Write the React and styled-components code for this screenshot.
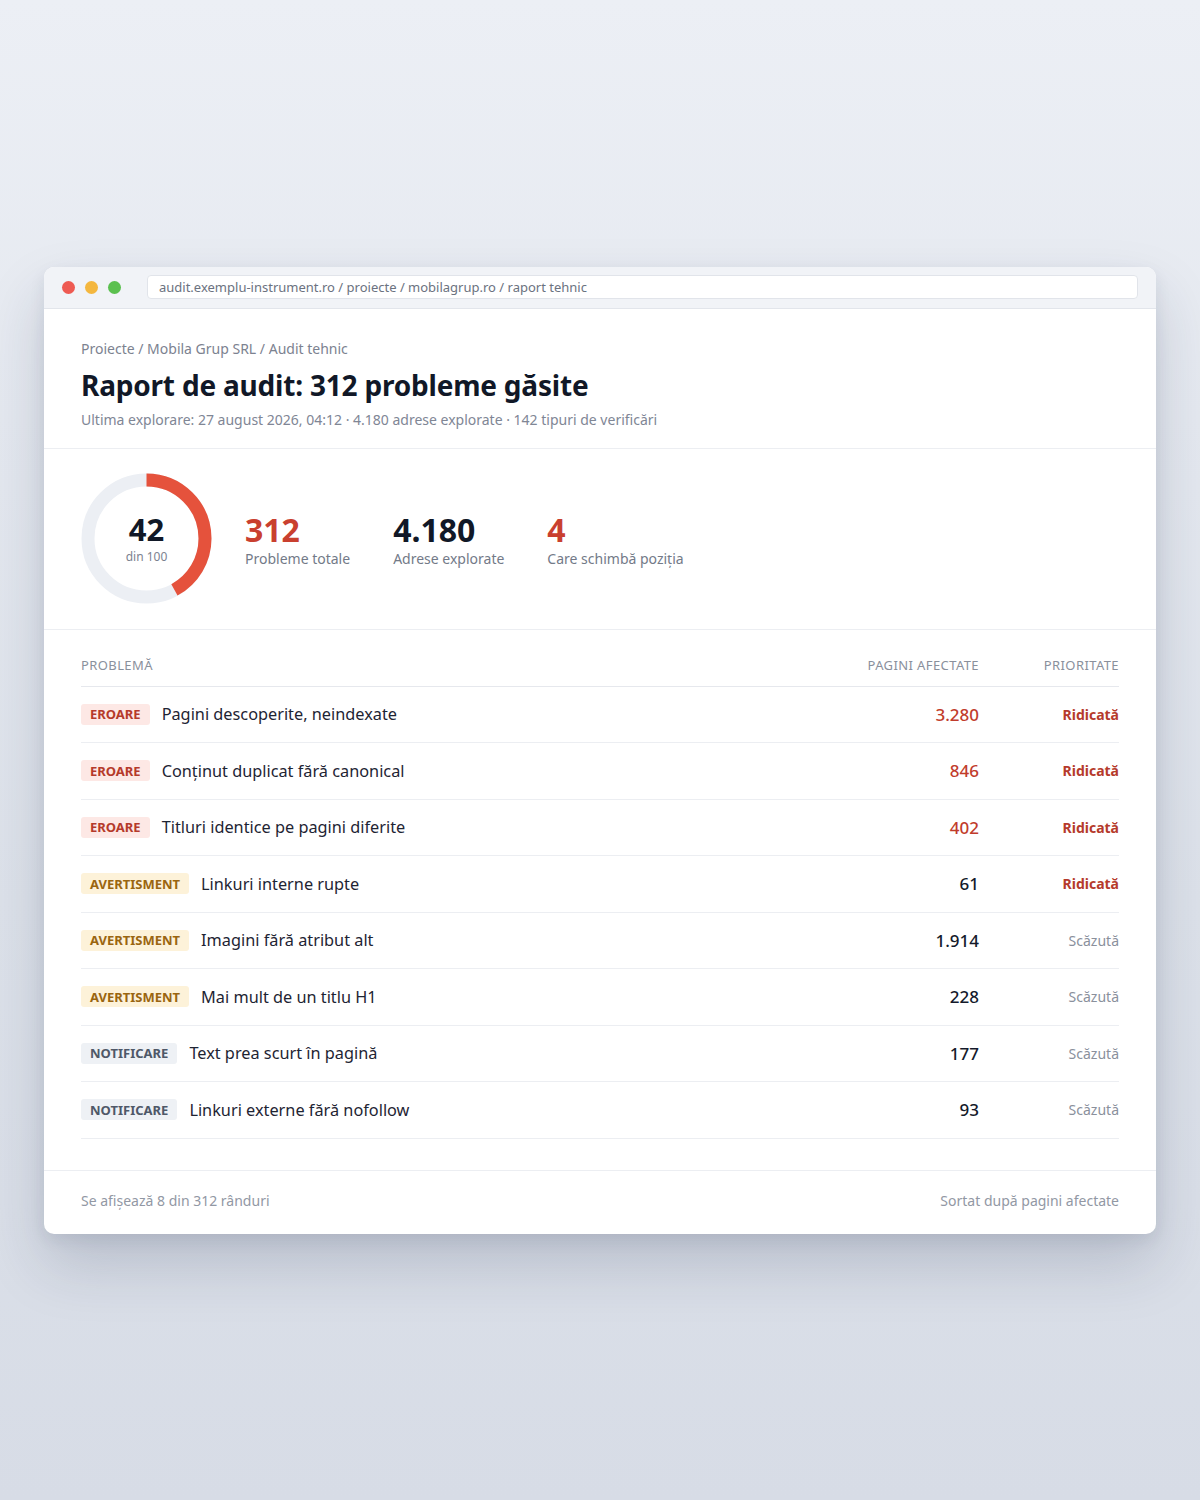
import React from 'react';
import styled, { createGlobalStyle } from 'styled-components';

const GlobalStyle = createGlobalStyle`
    * { box-sizing: border-box; }
    html, body { margin: 0; padding: 0; }
    body {
        font-family: "Noto Sans", "Open Sans", sans-serif;
        background: linear-gradient(180deg, #eceff5 0%, #dde2ea 60%, #d7dce6 100%);
        color: #141a2b;
    }
`;

const Page = styled.div`
    min-height: 1500px;
    display: flex;
    align-items: center;
    justify-content: center;
`;

const Window = styled.div`
    width: 1112px;
    background: #fff;
    border-radius: 10px;
    overflow: hidden;
    box-shadow: 0 30px 60px rgba(30, 40, 70, 0.18), 0 6px 16px rgba(30, 40, 70, 0.08);
`;

const TitleBar = styled.div`
    height: 42px;
    display: flex;
    align-items: center;
    gap: 10px;
    padding: 0 18px;
    background: #f1f3f7;
    border-bottom: 1px solid #e2e5eb;
`;

const Dot = styled.span`
    width: 13px;
    height: 13px;
    border-radius: 50%;
    background: ${p => p.color};
`;

const UrlBar = styled.div`
    flex: 1;
    margin-left: 16px;
    height: 24px;
    display: flex;
    align-items: center;
    padding: 0 11px;
    background: #fff;
    border: 1px solid #e1e4ea;
    border-radius: 4px;
    font-size: 13px;
    color: #6b7280;
`;

const Header = styled.header`
    padding: 30px 37px 19px;
    border-bottom: 1px solid #eceef2;
`;

const Crumbs = styled.div`
    font-size: 14px;
    color: #7c8290;
`;

const Title = styled.h1`
    margin: 8px 0 6px;
    font-size: 28px;
    font-weight: 700;
    color: #111827;
    letter-spacing: -0.2px;
`;

const Meta = styled.div`
    font-size: 14px;
    color: #808695;
`;

const Stats = styled.section`
    display: flex;
    align-items: center;
    gap: 33px;
    padding: 24px 37px 25px;
    border-bottom: 1px solid #eceef2;
`;

const Gauge = styled.div`
    position: relative;
    width: 131px;
    height: 131px;
    flex-shrink: 0;
`;

const GaugeLabel = styled.div`
    position: absolute;
    inset: 0;
    display: flex;
    flex-direction: column;
    align-items: center;
    justify-content: center;
    padding-top: 3px;

    & strong {
        font-size: 31px;
        font-weight: 700;
        line-height: 1;
        color: #111827;
    }

    & span {
        margin-top: 3px;
        font-size: 12px;
        color: #7c8290;
    }
`;

const StatList = styled.div`
    display: flex;
    gap: 43px;
    padding-top: 4px;
`;

const Stat = styled.div`
    display: flex;
    flex-direction: column;

    & strong {
        font-size: 32px;
        font-weight: 700;
        line-height: 1.1;
        color: ${p => p.accent ? '#c9402f' : '#111827'};
    }

    & span {
        margin-top: 1px;
        font-size: 14px;
        color: #737a88;
    }
`;

const TableWrap = styled.section`
    padding: 26px 37px 31px;
    border-bottom: 1px solid #eceef2;
`;

const Grid = styled.div`
    display: grid;
    grid-template-columns: 1fr 180px 140px;
`;

const HeadCell = styled.div`
    padding-bottom: 12px;
    border-bottom: 1px solid #e6e8ed;
    font-size: 13px;
    letter-spacing: 0.4px;
    text-transform: uppercase;
    color: #8a909c;
    text-align: ${p => p.right ? 'right' : 'left'};
`;

const Cell = styled.div`
    height: 56.5px;
    display: flex;
    align-items: center;
    justify-content: ${p => p.right ? 'flex-end' : 'flex-start'};
    border-bottom: 1px solid #eceef2;
`;

const badgeTones = {
    error: { bg: '#fde8e5', fg: '#b53a2b' },
    warn: { bg: '#fdf2d9', fg: '#9a6510' },
    info: { bg: '#eef1f5', fg: '#4f5868' },
};

const Badge = styled.span`
    display: inline-flex;
    align-items: center;
    height: 21px;
    padding: 0 9px;
    margin-right: 12px;
    border-radius: 3px;
    font-size: 13px;
    font-weight: 700;
    text-transform: uppercase;
    background: ${p => badgeTones[p.tone].bg};
    color: ${p => badgeTones[p.tone].fg};
`;

const IssueName = styled.span`
    font-size: 16.3px;
    color: #1e2433;
`;

const Count = styled.span`
    font-size: 17px;
    font-weight: 500;
    color: ${p => p.accent ? '#c13c2c' : '#141a2b'};
`;

const Priority = styled.span`
    font-size: 14px;
    font-weight: ${p => p.high ? 700 : 400};
    color: ${p => p.high ? '#b53a2b' : '#8a909c'};
`;

const Footer = styled.footer`
    display: flex;
    justify-content: space-between;
    padding: 20px 37px 24px;
    font-size: 14px;
    color: #9298a4;
`;

const issues = [
    { tone: 'error', label: 'Eroare', name: 'Pagini descoperite, neindexate', count: '3.280', high: true },
    { tone: 'error', label: 'Eroare', name: 'Conținut duplicat fără canonical', count: '846', high: true },
    { tone: 'error', label: 'Eroare', name: 'Titluri identice pe pagini diferite', count: '402', high: true },
    { tone: 'warn', label: 'Avertisment', name: 'Linkuri interne rupte', count: '61', high: true },
    { tone: 'warn', label: 'Avertisment', name: 'Imagini fără atribut alt', count: '1.914', high: false },
    { tone: 'warn', label: 'Avertisment', name: 'Mai mult de un titlu H1', count: '228', high: false },
    { tone: 'info', label: 'Notificare', name: 'Text prea scurt în pagină', count: '177', high: false },
    { tone: 'info', label: 'Notificare', name: 'Linkuri externe fără nofollow', count: '93', high: false },
];

const ScoreRing = ({ score }) => {
    const r = 58.5;
    const c = 2 * Math.PI * r;
    return (
        <svg width="131" height="131" viewBox="0 0 131 131">
            <circle cx="65.5" cy="65.5" r={r} fill="none" stroke="#eceff4" strokeWidth="13" />
            <circle
                cx="65.5" cy="65.5" r={r} fill="none" stroke="#e5523c" strokeWidth="13"
                strokeDasharray={`${c * score / 100} ${c}`}
                transform="rotate(-90 65.5 65.5)"
            />
        </svg>
    );
};

const App = () => (
    <>
        <GlobalStyle />
        <Page>
            <Window>
                <TitleBar>
                    <Dot color="#ee5a52" />
                    <Dot color="#f4b73f" />
                    <Dot color="#5bc04f" />
                    <UrlBar>audit.exemplu-instrument.ro / proiecte / mobilagrup.ro / raport tehnic</UrlBar>
                </TitleBar>

                <Header>
                    <Crumbs>Proiecte / Mobila Grup SRL / Audit tehnic</Crumbs>
                    <Title>Raport de audit: 312 probleme găsite</Title>
                    <Meta>Ultima explorare: 27 august 2026, 04:12 · 4.180 adrese explorate · 142 tipuri de verificări</Meta>
                </Header>

                <Stats>
                    <Gauge>
                        <ScoreRing score={42} />
                        <GaugeLabel>
                            <strong>42</strong>
                            <span>din 100</span>
                        </GaugeLabel>
                    </Gauge>
                    <StatList>
                        <Stat accent>
                            <strong>312</strong>
                            <span>Probleme totale</span>
                        </Stat>
                        <Stat>
                            <strong>4.180</strong>
                            <span>Adrese explorate</span>
                        </Stat>
                        <Stat accent>
                            <strong>4</strong>
                            <span>Care schimbă poziția</span>
                        </Stat>
                    </StatList>
                </Stats>

                <TableWrap>
                    <Grid>
                        <HeadCell>Problemă</HeadCell>
                        <HeadCell right>Pagini afectate</HeadCell>
                        <HeadCell right>Prioritate</HeadCell>
                        {issues.map(issue => (
                            <React.Fragment key={issue.name}>
                                <Cell>
                                    <Badge tone={issue.tone}>{issue.label}</Badge>
                                    <IssueName>{issue.name}</IssueName>
                                </Cell>
                                <Cell right>
                                    <Count accent={issue.tone === 'error'}>{issue.count}</Count>
                                </Cell>
                                <Cell right>
                                    <Priority high={issue.high}>{issue.high ? 'Ridicată' : 'Scăzută'}</Priority>
                                </Cell>
                            </React.Fragment>
                        ))}
                    </Grid>
                </TableWrap>

                <Footer>
                    <span>Se afișează 8 din 312 rânduri</span>
                    <span>Sortat după pagini afectate</span>
                </Footer>
            </Window>
        </Page>
    </>
);

export default App;
